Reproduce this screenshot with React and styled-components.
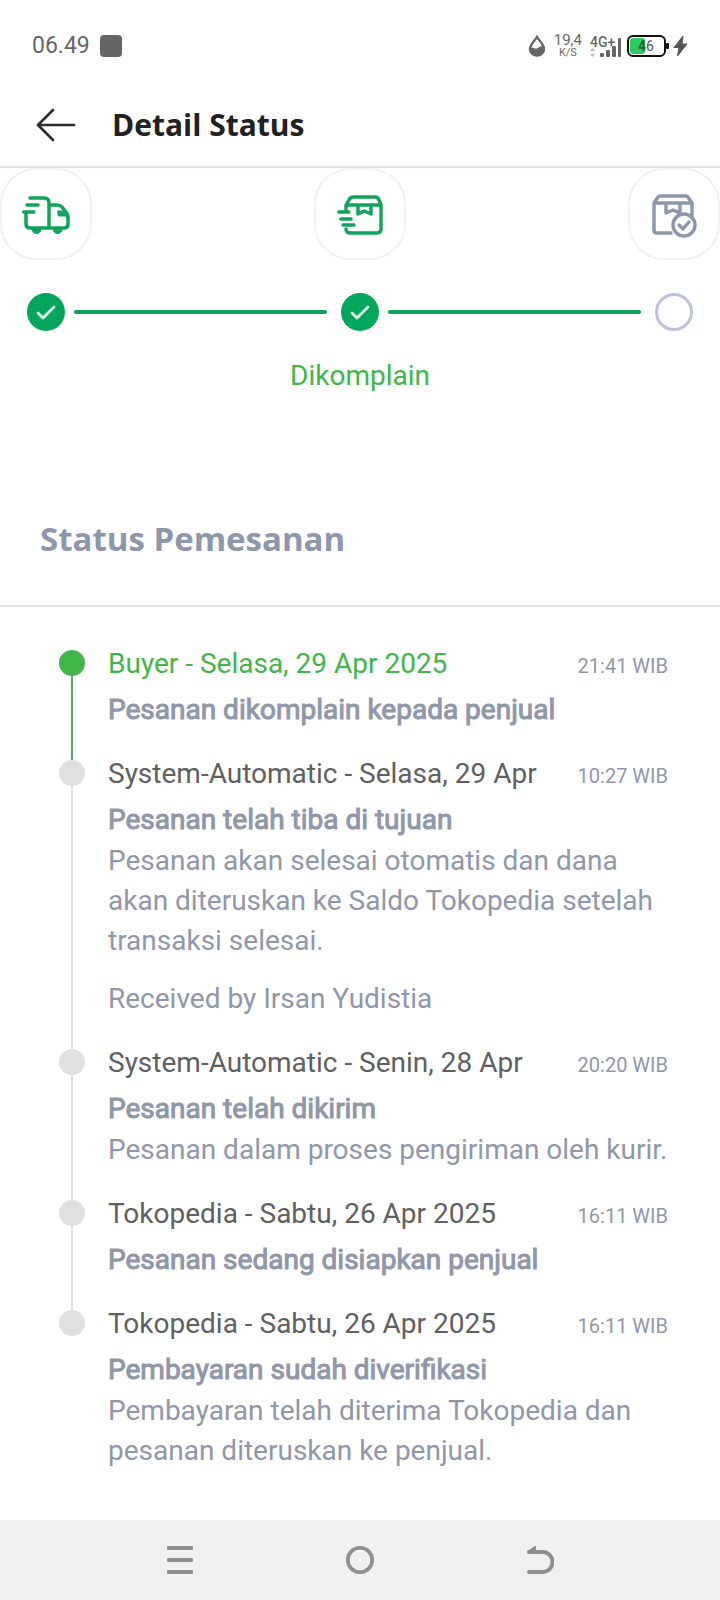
import React from 'react';
import styled, { createGlobalStyle } from 'styled-components';

const color = {
  brand: '#03a65a',
  brandLine: '#0fa35c',
  active: '#42b549',
  muted: '#9097a9',
  heading: '#8d96aa',
  text: '#606060',
  divider: '#d9e3e8',
  idle: '#e0e0e0',
};

const GlobalStyle = createGlobalStyle`
  *, *::before, *::after { box-sizing: border-box; }
  body { margin: 0; background: #fff; font-family: Roboto, sans-serif; }
  h1, h2, p, ol { margin: 0; padding: 0; }
  button { border: 0; padding: 0; background: none; cursor: pointer; }
  svg { display: block; flex: none; }
`;

const Screen = styled.div`
  min-height: 100vh;
  display: flex;
  flex-direction: column;
`;

const StatusBar = styled.div`
  height: 82px;
  padding: 10px 32px 0;
  display: flex;
  align-items: center;
  justify-content: space-between;
  color: #666;
`;

const StatusGroup = styled.div`
  display: flex;
  align-items: center;
  gap: ${(p) => p.$gap}px;
`;

const Clock = styled.span`
  font-size: 23px;
  line-height: 28px;
`;

const AppBadge = styled.span`
  width: 22px;
  height: 22px;
  border-radius: 4px;
  background: #666;
`;

const NetSpeed = styled.div`
  display: flex;
  flex-direction: column;
  align-items: center;
  font-size: 15px;
  line-height: 13px;
`;

const NetUnit = styled.span`
  font-size: 11px;
  line-height: 11px;
`;

const Header = styled.header`
  height: 86px;
  padding: 2px 36px 0;
  display: flex;
  align-items: center;
  gap: 36px;
  border-bottom: 2px solid ${color.divider};
`;

const BackButton = styled.button`
  width: 40px;
  height: 40px;
`;

const Title = styled.h1`
  font-family: "Open Sans", sans-serif;
  font-size: 30px;
  font-weight: 700;
  line-height: 40px;
  color: #212121;
`;

const Main = styled.main`
  flex: 1;
`;

const StageIcons = styled.div`
  display: flex;
  justify-content: space-between;
`;

const StageTile = styled.div`
  width: 92px;
  height: 92px;
  padding-top: 2px;
  border: 2px solid #f1f2f3;
  border-radius: 36px;
  display: flex;
  align-items: center;
  justify-content: center;
  color: ${(p) => (p.$done ? color.brandLine : color.heading)};
`;

const Stepper = styled.div`
  display: flex;
  align-items: center;
  padding: 33px 27px 0;
`;

const StepDot = styled.span`
  flex: none;
  width: 38px;
  height: 38px;
  border-radius: 50%;
  display: flex;
  align-items: center;
  justify-content: center;
  background: ${(p) => (p.$done ? color.brand : '#fff')};
  border: ${(p) => (p.$done ? '0' : '3px solid #bcc3dc')};
`;

const StepLine = styled.span`
  flex: 1;
  height: 4px;
  margin: 0 14px 0 9px;
  border-radius: 2px;
  background: ${color.brandLine};
`;

const StageLabel = styled.p`
  padding-top: 25px;
  text-align: center;
  font-size: 28px;
  line-height: 40px;
  color: ${color.active};
`;

const SectionHead = styled.div`
  padding: 122px 40px 46px;
  border-bottom: 2px solid ${color.divider};
`;

const SectionTitle = styled.h2`
  font-family: "Open Sans", sans-serif;
  font-size: 33px;
  font-weight: 700;
  line-height: 41px;
  color: ${color.heading};
`;

const Timeline = styled.ol`
  list-style: none;
  && { padding: 37px 52px 0 59px; }
`;

const Entry = styled.li`
  display: flex;
  gap: 23px;
`;

const Rail = styled.div`
  flex: none;
  width: 26px;
  padding-top: 6px;
  display: flex;
  flex-direction: column;
  align-items: center;
`;

const RailDot = styled.span`
  width: 26px;
  height: 26px;
  border-radius: 50%;
  background: ${(p) => (p.$active ? color.active : color.idle)};
`;

const RailLine = styled.span`
  flex: 1;
  width: 2px;
  margin-bottom: -6px;
  background: ${(p) => (p.$active ? '#5aa868' : color.idle)};
`;

const EntryBody = styled.div`
  flex: 1;
  min-width: 0;
  padding-bottom: 24px;
  font-size: 28px;
  line-height: 40px;
  color: ${color.muted};
`;

const EntryTop = styled.div`
  display: flex;
  align-items: baseline;
  justify-content: space-between;
  gap: 16px;
`;

const EntryDate = styled.span`
  color: ${(p) => (p.$active ? color.active : color.text)};
`;

const EntryTime = styled.time`
  font-size: 20px;
  line-height: 24px;
  white-space: nowrap;
`;

const EntryTitle = styled.p`
  padding-top: 6px;
  -webkit-text-stroke: 1px ${color.muted};
`;

const EntryDetail = styled.p`
  padding-top: 1px;
`;

const EntryNote = styled.p`
  padding-top: 18px;
`;

const NavBar = styled.nav`
  height: 80px;
  padding: 0 90px;
  display: flex;
  background: #f0f0f0;
`;

const NavButton = styled.button`
  flex: 1;
  display: flex;
  align-items: center;
  justify-content: center;
  color: #8f8f8f;
`;

const entries = [
  {
    date: 'Buyer - Selasa, 29 Apr 2025',
    time: '21:41 WIB',
    title: 'Pesanan dikomplain kepada penjual',
    active: true,
  },
  {
    date: 'System-Automatic - Selasa, 29 Apr',
    time: '10:27 WIB',
    title: 'Pesanan telah tiba di tujuan',
    detail:
      'Pesanan akan selesai otomatis dan dana akan diteruskan ke Saldo Tokopedia setelah transaksi selesai.',
    note: 'Received by Irsan Yudistia',
  },
  {
    date: 'System-Automatic - Senin, 28 Apr',
    time: '20:20 WIB',
    title: 'Pesanan telah dikirim',
    detail: 'Pesanan dalam proses pengiriman oleh kurir.',
  },
  {
    date: 'Tokopedia - Sabtu, 26 Apr 2025',
    time: '16:11 WIB',
    title: 'Pesanan sedang disiapkan penjual',
  },
  {
    date: 'Tokopedia - Sabtu, 26 Apr 2025',
    time: '16:11 WIB',
    title: 'Pembayaran sudah diverifikasi',
    detail: 'Pembayaran telah diterima Tokopedia dan pesanan diteruskan ke penjual.',
  },
];

const line = {
  fill: 'none',
  stroke: 'currentColor',
  strokeLinecap: 'round',
  strokeLinejoin: 'round',
};

const DropIcon = () => (
  <svg width="18" height="22" viewBox="0 0 18 22">
    <path d="M9 2C7 5.500 2 9.500 2 14a7 6.500 0 0 0 14 0C16 9.500 11 5.500 9 2z" fill="none" stroke="#666" strokeWidth="2.400" />
    <path d="M2 14c3-3 5 1 8-1 2-2 4-2 6-1v2a7 6.500 0 0 1-14 0z" fill="#666" />
  </svg>
);

const SignalIcon = () => (
  <svg width="32" height="24" viewBox="0 0 32 24" fill="#666">
    <text x="0" y="13" fontFamily="Roboto, sans-serif" fontSize="14" fontWeight="500">4G+</text>
    <path d="M0 17l2.500-3 2.500 3zM0 20l2.500 3 2.500-3z" fill="#bbb" />
    <rect x="10" y="19" width="4" height="4" rx="1" />
    <rect x="16" y="16" width="4" height="7" rx="1" />
    <rect x="22" y="12" width="4" height="11" rx="1" />
    <rect x="28" y="4" width="3" height="19" rx="1" />
  </svg>
);

const BatteryIcon = () => (
  <svg width="43" height="24" viewBox="0 0 43 24">
    <rect x="1" y="2" width="37" height="20" rx="5" fill="#fff" stroke="#111" strokeWidth="2" />
    <rect x="3" y="4" width="15" height="16" rx="3" fill="#2fc863" />
    <rect x="39" y="9" width="3" height="6" rx="1" fill="#111" />
    <text x="19" y="17" textAnchor="middle" fontFamily="Roboto, sans-serif" fontSize="14" fill="#555">
      <tspan fontWeight="700" fill="#1c6b3a">4</tspan>6
    </text>
  </svg>
);

const BoltIcon = () => (
  <svg width="15" height="22" viewBox="0 0 15 22">
    <path d="M10 1L1 12.500h5L4.500 21 14 9H9z" fill="#555" stroke="#555" strokeLinejoin="round" />
  </svg>
);

const ArrowIcon = () => (
  <svg width="40" height="40" viewBox="0 0 40 40" {...line} stroke="#2b2d33" strokeWidth="2.700">
    <path d="M38 20H2M17 5L2 20l15 15" />
  </svg>
);

const TruckIcon = () => (
  <svg width="48" height="44" viewBox="0 0 48 44" {...line} strokeWidth="3.500">
    <path d="M8 5h14q5 0 5 5v25M5 12h11M1.800 19h10M4 19v12q0 4 4 4h34q4 0 4-4v-6q0-4-3-7l-3-4q-2-2-5-2h-8" />
    <path d="M36 18h6l4 5h-9q-1 0-1-1z" fill="currentColor" strokeWidth="1" />
    <path d="M10 36h9a4.500 4.500 0 0 1-9 0zM31 36h9a4.500 4.500 0 0 1-9 0z" fill="currentColor" strokeWidth="1" />
  </svg>
);

const BoxMovingIcon = () => (
  <svg width="46" height="44" viewBox="0 0 46 44" {...line} strokeWidth="3.400">
    <path d="M9 18v-6l3-5q1-3 5-3h21q3 0 4 3l2 5v24q0 4-4 4H13q-4 0-4-4M10 12h33M21 12v9l6.500-3 6.500 3v-9M1.800 19H12M3.800 26H14M6 32h11" />
  </svg>
);

const BoxDoneIcon = () => (
  <svg width="46" height="46" viewBox="0 0 46 46" {...line} strokeWidth="3.400">
    <path d="M20 41H6q-3 0-3-3V11l4-6q1-1 2-1h26q1 0 2 1l4 6v13M3 11h38M15 12v9l7-3 7 3v-9" />
    <circle cx="33" cy="33" r="11" fill="#fff" />
    <path d="M28 33l4 4 6-7" />
  </svg>
);

const CheckIcon = () => (
  <svg width="20" height="20" viewBox="0 0 20 20" {...line} stroke="#e6fff2" strokeWidth="2.800">
    <path d="M2 11l5 5L18 5" />
  </svg>
);

const MenuIcon = () => (
  <svg width="28" height="28" viewBox="0 0 28 28" fill="currentColor">
    <rect x="1" y="0" width="26" height="4" rx="1" />
    <rect x="1" y="12" width="26" height="4" rx="1" />
    <rect x="1" y="24" width="26" height="4" rx="1" />
  </svg>
);

const HomeIcon = () => (
  <svg width="28" height="28" viewBox="0 0 28 28" {...line} strokeWidth="3.600">
    <circle cx="14" cy="14" r="12.200" />
  </svg>
);

const ReturnIcon = () => (
  <svg width="28" height="28" viewBox="0 0 28 28" {...line} strokeWidth="3.800">
    <path d="M3 26h13.500a9.800 9.800 0 0 0 0-20H3" />
    <path d="M2 6l7-5v5z" fill="currentColor" strokeWidth="2" />
  </svg>
);

export default function App() {
  return (
    <Screen>
      <GlobalStyle />
      <StatusBar>
        <StatusGroup $gap={10}>
          <Clock>06.49</Clock>
          <AppBadge />
        </StatusGroup>
        <StatusGroup $gap={5}>
          <StatusGroup $gap={8}>
            <DropIcon />
            <NetSpeed>
              <span>19,4</span>
              <NetUnit>K/S</NetUnit>
            </NetSpeed>
            <SignalIcon />
          </StatusGroup>
          <StatusGroup $gap={3}>
            <BatteryIcon />
            <BoltIcon />
          </StatusGroup>
        </StatusGroup>
      </StatusBar>
      <Header>
        <BackButton type="button" aria-label="Kembali">
          <ArrowIcon />
        </BackButton>
        <Title>Detail Status</Title>
      </Header>
      <Main>
        <StageIcons>
          <StageTile $done><TruckIcon /></StageTile>
          <StageTile $done><BoxMovingIcon /></StageTile>
          <StageTile><BoxDoneIcon /></StageTile>
        </StageIcons>
        <Stepper>
          <StepDot $done><CheckIcon /></StepDot>
          <StepLine />
          <StepDot $done><CheckIcon /></StepDot>
          <StepLine />
          <StepDot />
        </Stepper>
        <StageLabel>Dikomplain</StageLabel>
        <SectionHead>
          <SectionTitle>Status Pemesanan</SectionTitle>
        </SectionHead>
        <Timeline>
          {entries.map((entry, i) => (
            <Entry key={entry.title}>
              <Rail>
                <RailDot $active={entry.active} />
                {i < entries.length - 1 && <RailLine $active={entry.active} />}
              </Rail>
              <EntryBody>
                <EntryTop>
                  <EntryDate $active={entry.active}>{entry.date}</EntryDate>
                  <EntryTime>{entry.time}</EntryTime>
                </EntryTop>
                <EntryTitle>{entry.title}</EntryTitle>
                {entry.detail && <EntryDetail>{entry.detail}</EntryDetail>}
                {entry.note && <EntryNote>{entry.note}</EntryNote>}
              </EntryBody>
            </Entry>
          ))}
        </Timeline>
      </Main>
      <NavBar>
        <NavButton type="button" aria-label="Menu"><MenuIcon /></NavButton>
        <NavButton type="button" aria-label="Beranda"><HomeIcon /></NavButton>
        <NavButton type="button" aria-label="Kembali"><ReturnIcon /></NavButton>
      </NavBar>
    </Screen>
  );
}
